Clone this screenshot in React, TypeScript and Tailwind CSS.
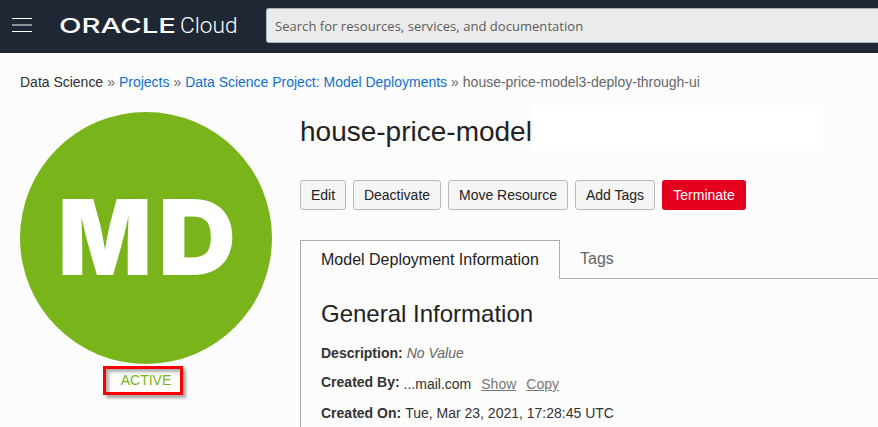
import React from "react";

const actions = [
  { label: "Edit", width: "w-[46px]" },
  { label: "Deactivate", width: "w-[88px]" },
  { label: "Move Resource", width: "w-[120px]" },
  { label: "Add Tags", width: "w-[80px]" },
];

function Logo() {
  return (
    <svg
      className="ml-7 block shrink-0"
      width="178"
      height="30"
      viewBox="0 0 178 30"
      fill="#fff"
      aria-label="Oracle Cloud"
    >
      <text
        x="-1"
        y="22"
        fontFamily="Inter, sans-serif"
        fontSize="20.5"
        fontWeight="500"
        textLength="117"
        lengthAdjust="spacingAndGlyphs"
      >
        ORACLE
      </text>
      <text
        x="120"
        y="22"
        fontFamily="Roboto, sans-serif"
        fontSize="22.5"
        fontWeight="300"
        textLength="57.5"
        lengthAdjust="spacingAndGlyphs"
      >
        Cloud
      </text>
    </svg>
  );
}

function Header() {
  return (
    <header className="flex h-[53px] items-start bg-[#1e2733] pl-3">
      <button aria-label="Menu" className="mt-[18px] flex h-[14px] w-5 shrink-0 flex-col justify-between">
        <span className="h-px w-full bg-white" />
        <span className="h-[2px] w-full bg-[#8e9399]" />
        <span className="h-px w-full bg-white" />
      </button>
      <div className="mt-[11px]">
        <Logo />
      </div>
      <div className="mt-2 ml-7 flex h-[35px] flex-1 items-center rounded-l-[3px] border border-r-0 border-[#a9b5c0] bg-[#ebebeb] pt-[2px] pl-2 font-['Open_Sans',sans-serif] text-[13px] tracking-[0.04px] whitespace-nowrap text-[#5c5b59]">
        Search for resources, services, and documentation
      </div>
    </header>
  );
}

function Breadcrumbs() {
  return (
    <nav className="flex h-[18px] gap-1 text-[14px] leading-[18px] tracking-[-0.01px] whitespace-nowrap text-[#666]">
      <span className="text-[#2f2f2f]">Data Science</span>
      <span>»</span>
      <a className="text-[#0f71cb]">Projects</a>
      <span>»</span>
      <a className="text-[#0f71cb]">Data Science Project: Model Deployments</a>
      <span>»</span>
      <span>house-price-model3-deploy-through-ui</span>
    </nav>
  );
}

function StatusBadge() {
  return (
    <aside className="flex w-[252px] shrink-0 flex-col">
      <svg className="mt-[6px] block" width="252" height="252" viewBox="0 0 252 252">
        <circle cx="126" cy="126" r="126" fill="#79b51a" />
        <g fill="#fff" fontFamily="Inter, sans-serif" fontWeight="900" fontSize="104.5">
          <text x="38" y="163" textLength="94" lengthAdjust="spacingAndGlyphs">M</text>
          <text x="138" y="163" textLength="78" lengthAdjust="spacingAndGlyphs">D</text>
        </g>
      </svg>
      <div className="mt-[2px] ml-[83px] flex h-[29px] w-[80px] items-center justify-center border-[3px] border-[#f90000] pl-[6px] text-[14px] text-[#79b51a] shadow-[3px_3px_3px_rgba(0,0,0,0.35),inset_3px_3px_3px_rgba(0,0,0,0.3)]">
        ACTIVE
      </div>
    </aside>
  );
}

function Tabs() {
  return (
    <div className="mt-[30px] flex h-[39px] text-[16px] leading-[38px] whitespace-nowrap">
      <div className="w-[260px] border border-b-0 border-[#adadad] pl-5 text-[#222]">Model Deployment Information</div>
      <div className="flex-1 border-b border-[#adadad] pl-5 text-[#666]">Tags</div>
    </div>
  );
}

function Information() {
  return (
    <section className="flex-1 border-l border-[#adadad] pl-5 text-[14px] whitespace-nowrap text-[#333]">
      <h2 className="pt-5 text-[24px] leading-[30px] text-[#222]">General Information</h2>
      <div className="mt-[15px] flex h-[18px] gap-1 leading-[18px]">
        <b>Description:</b>
        <i className="text-[#666]">No Value</i>
      </div>
      <div className="mt-[11px] flex h-[20px] leading-[18px]">
        <b>Created By:</b>
        <div className="flex pt-[2px] pl-1">
          <span>...mail.com</span>
          <a className="ml-[10px] text-[#777] underline">Show</a>
          <a className="ml-[10px] text-[#777] underline">Copy</a>
        </div>
      </div>
      <div className="mt-[11px] flex h-[18px] gap-1 leading-[18px]">
        <b>Created On:</b>
        <span>Tue, Mar 23, 2021, 17:28:45 UTC</span>
      </div>
    </section>
  );
}

export default function App() {
  return (
    <div className="flex h-[427px] w-[878px] flex-col overflow-hidden bg-[#fcfcfc] font-['Liberation_Sans',Arial,sans-serif]">
      <Header />
      <div className="mt-5 pl-5">
        <Breadcrumbs />
      </div>
      <div className="mt-[15px] flex flex-1 pl-5">
        <StatusBadge />
        <main className="ml-7 flex flex-1 flex-col">
          <div className="flex h-[45px] items-start">
            <h1 className="w-[233px] pt-[10px] text-[28px] leading-[32px] whitespace-nowrap text-[#222]">
              house-price-model
            </h1>
            <div className="h-[45px] w-[290px] bg-white" />
          </div>
          <div className="mt-[29px] flex gap-[7px] text-[14px] whitespace-nowrap">
            {actions.map((action) => (
              <button
                key={action.label}
                className={`h-[30px] rounded-[3px] border border-[#b4b9c2] bg-[#f5f5f5] text-[#222] ${action.width}`}
              >
                {action.label}
              </button>
            ))}
            <button className="h-[30px] w-[84px] rounded-[3px] bg-[#e60020] text-white">Terminate</button>
          </div>
          <Tabs />
          <Information />
        </main>
      </div>
    </div>
  );
}
